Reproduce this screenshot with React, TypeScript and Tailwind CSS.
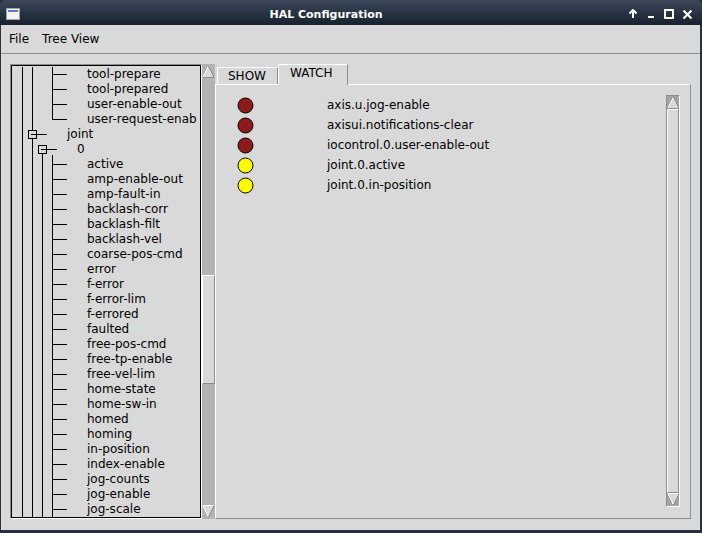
import React from 'react';

type Kind = 'top' | 'topLast' | 'joint' | 'zero' | 'leaf';

const treeRows: { label: string; kind: Kind }[] = [
  { label: 'tool-prepare', kind: 'top' },
  { label: 'tool-prepared', kind: 'top' },
  { label: 'user-enable-out', kind: 'top' },
  { label: 'user-request-enab', kind: 'topLast' },
  { label: 'joint', kind: 'joint' },
  { label: '0', kind: 'zero' },
  ...[
    'active', 'amp-enable-out', 'amp-fault-in', 'backlash-corr', 'backlash-filt', 'backlash-vel',
    'coarse-pos-cmd', 'error', 'f-error', 'f-error-lim', 'f-errored', 'faulted', 'free-pos-cmd',
    'free-tp-enable', 'free-vel-lim', 'home-state', 'home-sw-in', 'homed', 'homing', 'in-position',
    'index-enable', 'jog-counts', 'jog-enable', 'jog-scale',
  ].map((label) => ({ label, kind: 'leaf' as Kind })),
];

const watched = [
  { name: 'axis.u.jog-enable', on: false },
  { name: 'axisui.notifications-clear', on: false },
  { name: 'iocontrol.0.user-enable-out', on: false },
  { name: 'joint.0.active', on: true },
  { name: 'joint.0.in-position', on: true },
];

function V({ x, y1 = 0, y2 = 15 }: { x: number; y1?: number; y2?: number }) {
  return <line x1={x + 0.5} y1={y1} x2={x + 0.5} y2={y2} stroke="#000" />;
}

function H({ x1, x2 }: { x1: number; x2: number }) {
  return <line x1={x1} y1={7.5} x2={x2} y2={7.5} stroke="#000" />;
}

function MinusBox({ x }: { x: number }) {
  // collapse box, 9x9, centred on the vertical line
  return (
    <g>
      <rect x={x - 3.5} y={3.5} width={8} height={8} fill="#d9d9d9" stroke="#000" />
      <line x1={x - 1} y1={7.5} x2={x + 4} y2={7.5} stroke="#000" />
    </g>
  );
}

function TreeLines({ kind }: { kind: Kind }) {
  const w = kind === 'joint' ? 55 : kind === 'zero' ? 65 : 75;
  return (
    <svg width={w} height={15} className="shrink-0" shapeRendering="crispEdges">
      <V x={10} />
      <V x={20} />
      {kind === 'top' && (
        <>
          <V x={40} />
          <H x1={40} x2={55} />
        </>
      )}
      {kind === 'topLast' && (
        <>
          <V x={40} y2={8} />
          <H x1={40} x2={55} />
        </>
      )}
      {kind === 'joint' && (
        <>
          <H x1={24} x2={35} />
          <MinusBox x={20} />
        </>
      )}
      {kind === 'zero' && (
        <>
          <V x={30} y1={11} />
          <V x={40} y1={13} />
          <H x1={34} x2={45} />
          <MinusBox x={30} />
        </>
      )}
      {kind === 'leaf' && (
        <>
          <V x={30} />
          <V x={40} />
          <H x1={40} x2={55} />
        </>
      )}
    </svg>
  );
}

function ArrowUp({ up = true }: { up?: boolean }) {
  return (
    <svg width={13} height={13} shapeRendering="crispEdges">
      {up ? (
        <>
          <polygon points="6.5,1 12,12 1,12" fill="#d9d9d9" />
          <line x1={1} y1={12} x2={6.5} y2={1} stroke="#fff" />
          <line x1={6.5} y1={1} x2={12} y2={12} stroke="#8c8c8c" />
          <line x1={1} y1={12.5} x2={12} y2={12.5} stroke="#8c8c8c" />
        </>
      ) : (
        <>
          <polygon points="1,1 12,1 6.5,12" fill="#d9d9d9" />
          <line x1={1} y1={0.5} x2={12} y2={0.5} stroke="#fff" />
          <line x1={1} y1={1} x2={6.5} y2={12} stroke="#fff" />
          <line x1={12} y1={1} x2={6.5} y2={12} stroke="#8c8c8c" />
        </>
      )}
    </svg>
  );
}

function Lamp({ on }: { on: boolean }) {
  return (
    <svg width={17} height={17} className="shrink-0">
      <circle cx={8.5} cy={8.5} r={7.5} fill={on ? '#ffff00' : '#8e1b1b'} stroke="#000" />
    </svg>
  );
}

export default function App() {
  return (
    <div className="w-[702px] h-[533px] bg-[#27313f] flex flex-col overflow-hidden font-['DejaVu_Sans',sans-serif] text-[12px] text-black">
      {/* title bar */}
      <div className="h-[25px] shrink-0 flex items-center pt-[3px] rounded-t-[6px] bg-gradient-to-b from-[#3c495b] to-[#17212e] text-white">
        <div className="w-[26px] flex justify-center">
          <div className="w-[14px] h-[12px] bg-[#f2f2f2] border border-[#9aa3ad] flex flex-col">
            <div className="h-[2px] mt-[1px] mx-[1px] bg-[#5b7bb0]" />
          </div>
        </div>
        <div className="flex-1 text-center font-bold text-[11px] leading-none">HAL Configuration</div>
        <div className="w-[76px] flex items-center gap-[8px] pl-[2px]">
          <svg width={10} height={10} viewBox="0 0 10 10">
            <path d="M5 1 L5 9 M1.5 4.5 L5 1 L8.5 4.5" stroke="#fff" strokeWidth={2} fill="none" />
          </svg>
          <svg width={10} height={10} viewBox="0 0 10 10" shapeRendering="crispEdges">
            <rect x={2} y={7} width={6} height={2} fill="#fff" />
          </svg>
          <svg width={10} height={10} viewBox="0 0 10 10" shapeRendering="crispEdges">
            <rect x={1} y={1} width={8} height={8} fill="none" stroke="#fff" strokeWidth={1.6} />
          </svg>
          <svg width={11} height={11} viewBox="0 0 11 11">
            <path d="M1.5 1.5 L9.5 9.5 M9.5 1.5 L1.5 9.5" stroke="#fff" strokeWidth={2} />
          </svg>
        </div>
      </div>

      {/* window body */}
      <div className="h-[505px] shrink-0 ml-[1px] mr-[2px] bg-[#d9d9d9] flex flex-col">
        <div className="h-[29px] shrink-0 flex items-center pl-[8px] gap-[13px] border-b border-[#8c8c8c]">
          <span>File</span>
          <span>Tree View</span>
        </div>

        <div className="flex pt-[10px] pl-[9px]">
          {/* tree */}
          <div className="w-[192px] h-[455px] border-l border-t border-[#8c8c8c] border-r-white border-b-white border-r border-b">
            <div className="h-full border border-black overflow-hidden pt-[1px]">
              {treeRows.map((r, i) => (
                <div key={i} className="h-[15px] flex items-center whitespace-nowrap leading-[15px]">
                  <TreeLines kind={r.kind} />
                  <span>{r.label}</span>
                </div>
              ))}
            </div>
          </div>

          {/* tree scrollbar */}
          <div className="w-[13px] h-[455px] bg-[#b3b3b3] flex flex-col">
            <div className="h-[13px] mt-[1px]">
              <ArrowUp />
            </div>
            <div className="h-[197px]" />
            <div className="h-[109px] bg-[#d9d9d9] border-t border-l border-white border-r border-b border-r-[#8c8c8c] border-b-[#8c8c8c]" />
            <div className="flex-1" />
            <div className="h-[13px] mb-[1px]">
              <ArrowUp up={false} />
            </div>
          </div>

          {/* notebook */}
          <div className="w-[476px] h-[455px] flex flex-col">
            <div className="h-[20px] flex items-end shrink-0">
              <div className="ml-[2px] w-[61px] h-[17px] border-l border-t border-white border-r border-r-[#8c8c8c] pl-[10px] leading-[16px]">
                SHOW
              </div>
              <div className="relative z-10 w-[70px] h-[21px] -mb-[1px] bg-[#d9d9d9] border-l border-t border-white border-r border-r-[#8c8c8c] pl-[11px] leading-[17px]">
                WATCH
              </div>
              <div className="flex-1" />
            </div>
            <div className="flex-1 flex border-l border-t border-white border-r border-b border-r-[#8c8c8c] border-b-[#8c8c8c]">
              <div className="flex-1 pt-[10px] pl-[21px]">
                {watched.map((w) => (
                  <div key={w.name} className="h-[20px] flex items-center">
                    <Lamp on={w.on} />
                    <span className="ml-[73px]">{w.name}</span>
                  </div>
                ))}
              </div>
              <div className="w-[14px] mt-[10px] mb-[11px] mr-[10px] flex flex-col border border-[#8c8c8c] border-r-white border-b-white">
                <div className="h-[13px] bg-[#a3a3a3]">
                  <ArrowUp />
                </div>
                <div className="flex-1 bg-[#d9d9d9] border-t border-l border-white border-r border-b border-r-[#8c8c8c] border-b-[#8c8c8c]" />
                <div className="h-[13px] bg-[#a3a3a3]">
                  <ArrowUp up={false} />
                </div>
              </div>
            </div>
          </div>
        </div>
      </div>
      <div className="flex-1" />
    </div>
  );
}
